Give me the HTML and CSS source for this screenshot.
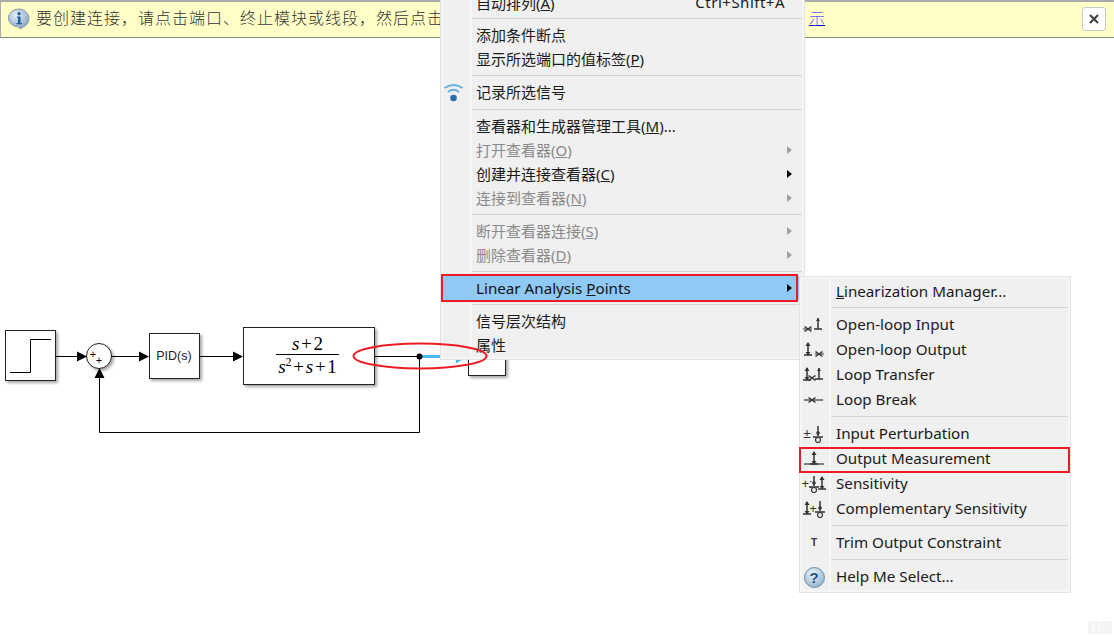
FILE: index.html
```html
<!DOCTYPE html>
<html lang="en">
<head>
    <meta charset="UTF-8">
    <title>Linear Analysis Points</title>
    <link rel="stylesheet" href="styles.css">
</head>
<body>

<svg class="sprite" width="0" height="0">
    <defs>
        <g id="cross">
            <path d="M-3.500 -2.500L3.500 2.500M-3.500 2.500L3.500 -2.500" fill="none" stroke="#333" stroke-width="1.500"/>
        </g>
        <g id="tee">
            <path d="M0 -11V0M-4 0H4" fill="none" stroke="#333" stroke-width="1.500"/>
            <path d="M-2 -8L0 -11L2 -8Z" fill="#333"/>
        </g>
        <g id="updown">
            <path d="M0 -11V1M-4 1H4" fill="none" stroke="#333" stroke-width="1.500"/>
            <path d="M-2.500 -8L0 -12L2.500 -8ZM-2.500 -2L0 1.500L2.500 -2Z" fill="#333"/>
        </g>
        <g id="probe">
            <path d="M0 -11V-1M-5 0H5" fill="none" stroke="#333" stroke-width="1.500"/>
            <circle cx="0" cy="3" r="2.500" fill="#f0f0f0" stroke="#333" stroke-width="1.200"/>
            <circle cx="0" cy="-4" r="1.800" fill="#333"/>
        </g>
    </defs>
</svg>

<!-- message bar -->
<div class="banner">
    <svg class="banner-icon" width="22" height="22" viewBox="0 0 22 22">
        <defs>
            <radialGradient id="infoFill" cx="40%" cy="30%" r="75%">
                <stop offset="0" stop-color="#e8f0f8"/>
                <stop offset="1" stop-color="#7f9fc0"/>
            </radialGradient>
        </defs>
        <path d="M11 1a10 9.500 0 0 1 4 18.200L12 21l-1-2a10 8.500 0 0 1 0-18z" fill="url(#infoFill)" stroke="#8a9aa8"/>
        <circle cx="11" cy="5.800" r="1.700" fill="#1f5f9f"/>
        <path d="M9 8.500h3.500v6.500h1.500v1.300H8.500V15H10V9.800H9z" fill="#1f5f9f"/>
    </svg>
    <span class="banner-text">要创建连接，请点击端口、终止模块或线段，然后点击</span>
    <a class="banner-link" href="#">示</a>
    <button class="banner-close" type="button">
        <svg width="10" height="10" viewBox="0 0 10 10"><path d="M1 1L9 9M9 1L1 9" stroke="#444" stroke-width="2.200"/></svg>
    </button>
</div>

<!-- block diagram -->
<svg class="diagram" width="1114" height="635" viewBox="0 0 1114 635">
    <defs>
        <filter id="blockShadow" x="-10%" y="-10%" width="125%" height="125%">
            <feDropShadow dx="2" dy="2" stdDeviation="1.500" flood-color="#000" flood-opacity="0.35"/>
        </filter>
    </defs>

    <rect class="block" x="5.500" y="330.500" width="50" height="50"/>
    <path class="wire" d="M10 372.500H30.500V339.500H51"/>
    <rect class="block" x="149.500" y="333.500" width="50" height="45"/>
    <rect class="block" x="243.500" y="327.500" width="131" height="57"/>
    <rect class="block" x="468.500" y="340.500" width="37" height="35"/>
    <circle class="block" cx="99" cy="356" r="12.500"/>

    <path class="wire" d="M55 356.500H78M111 356.500H140M199 356.500H234M374 356.500H440"/>
    <path class="wire" d="M419.500 356.500V432.500H99.500V378"/>
    <path d="M77 351.500L87 356.500L77 361.500ZM139 351.500L149 356.500L139 361.500ZM233 351.500L243 356.500L233 361.500ZM94.500 378L99.500 368L104.500 378Z" fill="#000"/>
    <path d="M419 356.500H442" stroke="#4db8f5" stroke-width="3"/>
    <path d="M456 349.500L468 356.500L456 363.500Z" fill="#4db8f5"/>
    <circle cx="419.500" cy="356.500" r="3" fill="#000"/>

    <text class="sum-sign" x="93" y="358">+</text>
    <text class="sum-sign" x="99" y="364">+</text>
    <text class="pid" x="174" y="360">PID(s)</text>
    <text class="tf" x="307.500" y="350">s<tspan class="tf-plain"> + 2</tspan></text>
    <path d="M276 354.500H339" stroke="#000"/>
    <text class="tf" x="307.500" y="373">s<tspan class="tf-sup" dy="-7">2</tspan><tspan class="tf-plain" dy="7"> + </tspan>s<tspan class="tf-plain"> + 1</tspan></text>
</svg>

<!-- context menu -->
<div class="menu menu-main">
    <div class="menu-row"><span>自动排列(<u>A</u>)</span><span class="shortcut">Ctrl+Shift+A</span></div>
    <div class="menu-sep sep-first"></div>
    <div class="menu-row">添加条件断点</div>
    <div class="menu-row"><span>显示所选端口的值标签(<u>P</u>)</span></div>
    <div class="menu-sep"></div>
    <div class="menu-row">
        <svg class="log-icon" width="22" height="22" viewBox="0 0 22 22">
            <path d="M1.500 6Q10.500 0 19.500 6M5 10Q10.500 5.500 16 10" fill="none" stroke="#6cb2dc" stroke-width="1.800"/>
            <circle cx="10.500" cy="16" r="3.300" fill="#2a6fb0"/>
        </svg>
        记录所选信号
    </div>
    <div class="menu-sep sep-wide"></div>
    <div class="menu-row"><span>查看器和生成器管理工具(<u>M</u>)...</span></div>
    <div class="menu-row disabled has-sub"><span>打开查看器(<u>O</u>)</span></div>
    <div class="menu-row has-sub"><span>创建并连接查看器(<u>C</u>)</span></div>
    <div class="menu-row disabled has-sub"><span>连接到查看器(<u>N</u>)</span></div>
    <div class="menu-sep"></div>
    <div class="menu-row disabled has-sub"><span>断开查看器连接(<u>S</u>)</span></div>
    <div class="menu-row disabled has-sub"><span>删除查看器(<u>D</u>)</span></div>
    <div class="menu-sep"></div>
    <div class="menu-row active has-sub"><span>Linear Analysis <u>P</u>oints</span></div>
    <div class="menu-sep"></div>
    <div class="menu-row">信号层次结构</div>
    <div class="menu-row">属性</div>
</div>

<!-- submenu -->
<div class="menu menu-sub">
    <div class="sub-row sub-first"><span class="sub-icon"></span><span><u>L</u>inearization Manager...</span></div>
    <div class="menu-sep sub-sep"></div>
    <div class="sub-row">
        <svg class="sub-icon" viewBox="0 0 24 20"><path d="M1 14H10" stroke="#333"/><use href="#cross" x="6" y="14"/><use href="#tee" x="16" y="14"/></svg>
        <span>Open-loop Input</span>
    </div>
    <div class="sub-row">
        <svg class="sub-icon" viewBox="0 0 24 20"><use href="#updown" x="6" y="14"/><path d="M13 14H22" stroke="#333"/><use href="#cross" x="17" y="14"/></svg>
        <span>Open-loop Output</span>
    </div>
    <div class="sub-row">
        <svg class="sub-icon" viewBox="0 0 24 20"><use href="#updown" x="5" y="14"/><use href="#cross" x="10" y="13"/><use href="#tee" x="17" y="14"/></svg>
        <span>Loop Transfer</span>
    </div>
    <div class="sub-row">
        <svg class="sub-icon" viewBox="0 0 24 20"><path d="M2 10H21" stroke="#333" stroke-width="1.200"/><use href="#cross" x="10" y="10"/></svg>
        <span>Loop Break</span>
    </div>
    <div class="menu-sep sub-sep"></div>
    <div class="sub-row">
        <svg class="sub-icon" viewBox="0 0 24 20"><text class="icon-sign" x="5" y="14">±</text><use href="#probe" x="16" y="13"/></svg>
        <span>Input Perturbation</span>
    </div>
    <div class="sub-row">
        <svg class="sub-icon" viewBox="0 0 24 20"><path d="M2 15H22" stroke="#333" stroke-width="1.200"/><use href="#updown" x="12" y="14"/></svg>
        <span>Output Measurement</span>
    </div>
    <div class="sub-row">
        <svg class="sub-icon" viewBox="0 0 24 20"><text class="icon-sign" x="5" y="14">+:</text><use href="#probe" x="12" y="13"/><use href="#updown" x="20" y="14"/></svg>
        <span>Sensitivity</span>
    </div>
    <div class="sub-row">
        <svg class="sub-icon" viewBox="0 0 24 20"><use href="#updown" x="5" y="14"/><text class="icon-sign" x="11" y="14">+</text><use href="#probe" x="18" y="13"/></svg>
        <span>Complementary Sensitivity</span>
    </div>
    <div class="menu-sep sub-sep"></div>
    <div class="sub-row"><span class="sub-icon trim-icon">T</span><span>Trim Output Constraint</span></div>
    <div class="menu-sep sub-sep"></div>
    <div class="sub-row">
        <span class="sub-icon help-holder"><span class="help-icon">?</span></span>
        <span>Help Me Select...</span>
    </div>
</div>

<!-- red annotations -->
<div class="mark mark-linear"></div>
<div class="mark mark-output"></div>
<svg class="mark-ellipse" width="140" height="32" viewBox="0 0 140 32">
    <ellipse cx="70" cy="16" rx="66.500" ry="12.500" fill="none" stroke="#ed1c24" stroke-width="2"/>
</svg>

<div class="corner-bars"><span></span><span></span><span></span></div>

</body>
</html>
```

FILE: styles.css
```css
html, body {
    margin: 0;
    height: 635px;
    overflow: hidden;
    background-color: #fff;
}

body {
    position: relative;
    font-family: "Noto Sans", "Noto Sans CJK SC", sans-serif;
    color: #1a1a1a;
}

.sprite {
    position: absolute;
}

/* Message bar */
.banner {
    display: flex;
    align-items: center;
    box-sizing: border-box;
    height: 38px;
    padding: 0 8px 2px 7px;
    background-color: #ffffc8;
    border-top: 2px solid #aaa;
    border-bottom: 1px solid #888;
    border-left: 1px solid #aaa;
}

.banner-icon {
    flex: none;
    margin-right: 6px;
}

.banner-text {
    flex: none;
    width: 420px;
    margin-bottom: 3px;
    font-family: "Noto Sans CJK SC", sans-serif;
    font-size: 16px;
    font-weight: 300;
    letter-spacing: 1px;
    white-space: nowrap;
    color: #333;
}

.banner-link {
    margin-left: 353px;
    margin-bottom: 3px;
    font-family: "Noto Sans CJK SC", sans-serif;
    font-size: 16px;
    font-weight: 300;
    color: #5a5aff;
    text-decoration-color: #0000ee;
}

.banner-close {
    display: flex;
    align-items: center;
    justify-content: center;
    width: 24px;
    height: 24px;
    margin-left: auto;
    padding: 0;
    background-color: #fff;
    border: 1px solid #c8c8c8;
    border-radius: 3px;
}

/* Block diagram */
.diagram {
    position: absolute;
    left: 0;
    top: 0;
}

.block {
    fill: #fff;
    stroke: #222;
    stroke-width: 1;
    filter: url(#blockShadow);
}

.wire {
    fill: none;
    stroke: #000;
    stroke-width: 1;
}

.sum-sign {
    font-family: "Liberation Sans", sans-serif;
    font-size: 11px;
    text-anchor: middle;
}

.pid {
    font-family: "Liberation Sans", sans-serif;
    font-size: 12.500px;
    text-anchor: middle;
    fill: #222;
}

.tf {
    font-family: "Liberation Serif", serif;
    font-size: 19px;
    font-style: italic;
    word-spacing: -3px;
    text-anchor: middle;
    fill: #000;
}

.tf-plain {
    font-style: normal;
}

.tf-sup {
    font-size: 12px;
    font-style: normal;
}

/* Menus */
.menu {
    position: absolute;
    box-sizing: border-box;
    padding: 2px;
    background-color: #f0f0f0;
    border: 1px solid #e2e2e2;
    box-shadow: inset 0 0 0 2px #f6f6f6;
    font-size: 15px;
}

.menu::before {
    content: "";
    position: absolute;
    left: 29px;
    top: 2px;
    bottom: 2px;
    width: 2px;
    background-color: #f7f7f7;
}

.menu-main {
    left: 440px;
    top: -12px;
    width: 365px;
    height: 372px;
}

.menu-sub {
    left: 799px;
    top: 276px;
    width: 272px;
    height: 317px;
}

.menu-row {
    display: flex;
    align-items: center;
    justify-content: space-between;
    position: relative;
    box-sizing: border-box;
    height: 24px;
    padding: 0 20px 2px 33px;
    white-space: nowrap;
}

.menu-row.disabled {
    color: #8a8a8a;
}

.menu-row.active {
    padding-bottom: 0;
    background-color: #90c8f6;
    font-size: 15.200px;
    color: #111;
}

.menu-row.has-sub::after {
    content: "";
    position: absolute;
    right: 10px;
    top: 8px;
    border-left: 5px solid #000;
    border-top: 4px solid transparent;
    border-bottom: 4px solid transparent;
}

.menu-row.disabled.has-sub::after {
    border-left-color: #a0a0a0;
}

.shortcut {
    margin-right: -3px;
    letter-spacing: 0.500px;
}

.menu-sep {
    height: 1px;
    margin: 4px 0 4px 29px;
    background-color: #d4d4d4;
}

.sep-first {
    margin-top: 3px;
}

.sep-wide {
    margin-top: 5px;
}

.log-icon {
    position: absolute;
    left: 0;
    top: 2px;
}

.sub-row {
    display: flex;
    align-items: center;
    position: relative;
    box-sizing: border-box;
    height: 25px;
    padding-bottom: 3px;
    font-size: 15.200px;
    white-space: nowrap;
}

.sub-first {
    padding-bottom: 1px;
}

.sub-icon {
    flex: none;
    position: relative;
    top: 1px;
    width: 24px;
    height: 20px;
    margin-right: 10px;
}

.sub-sep {
    margin: 3px 0 5px 29px;
}

.icon-sign {
    font-family: "Liberation Sans", sans-serif;
    font-size: 13px;
    text-anchor: middle;
    fill: #333;
}

.trim-icon {
    font-family: "Liberation Sans", sans-serif;
    font-size: 10px;
    font-weight: bold;
    line-height: 20px;
    text-align: center;
    color: #333;
}

.help-holder {
    display: flex;
    align-items: center;
    justify-content: center;
}

.help-icon {
    flex: none;
    box-sizing: border-box;
    width: 21px;
    height: 21px;
    border: 1px solid #6a8ca8;
    border-radius: 50%;
    background: radial-gradient(circle at 40% 30%, #eaf2f8, #7ea6c8);
    font-family: "Liberation Sans", sans-serif;
    font-size: 15px;
    font-weight: bold;
    line-height: 19px;
    text-align: center;
    color: #2a4f78;
}

/* Red annotations */
.mark {
    position: absolute;
    box-sizing: border-box;
    border: 2px solid #ed1c24;
}

.mark-linear {
    left: 441px;
    top: 274px;
    width: 357px;
    height: 28px;
}

.mark-output {
    left: 799px;
    top: 447px;
    width: 271px;
    height: 26px;
}

.mark-ellipse {
    position: absolute;
    left: 350px;
    top: 340px;
}

.corner-bars {
    position: absolute;
    left: 1088px;
    top: 621px;
    display: flex;
    gap: 1px;
}

.corner-bars span {
    width: 5px;
    height: 13px;
    background-color: #f4f4f4;
}

.corner-bars span:last-child {
    width: 12px;
}
```
